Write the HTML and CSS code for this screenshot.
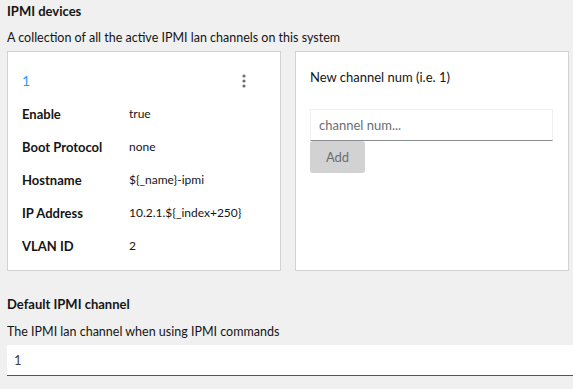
FILE: index.html
```html
<!DOCTYPE html>
<html lang="en">
<head>
  <meta charset="UTF-8">
  <title>IPMI devices</title>
  <link rel="stylesheet" href="styles.css">
</head>
<body>
  <div class="page">
    <h2 class="section-title">IPMI devices</h2>
    <p class="section-help">A collection of all the active IPMI lan channels on this system</p>

    <div class="cards">
      <div class="card">
        <div class="card-head">
          <span class="channel-num">1</span>
          <button class="kebab" aria-label="Actions">
            <svg width="4" height="14" viewBox="0 0 4 14"><circle cx="2" cy="2" r="1.6"/><circle cx="2" cy="7" r="1.6"/><circle cx="2" cy="12" r="1.6"/></svg>
          </button>
        </div>
        <dl class="props">
          <dt>Enable</dt><dd>true</dd>
          <dt>Boot Protocol</dt><dd>none</dd>
          <dt>Hostname</dt><dd>${_name}-ipmi</dd>
          <dt>IP Address</dt><dd>10.2.1.${_index+250}</dd>
          <dt>VLAN ID</dt><dd>2</dd>
        </dl>
      </div>

      <div class="card new-card">
        <label class="new-label">New channel num (i.e. 1)</label>
        <input class="text-input" type="text" placeholder="channel num...">
        <button class="add-btn" disabled>Add</button>
      </div>
    </div>

    <h3 class="field-title">Default IPMI channel</h3>
    <p class="field-help">The IPMI lan channel when using IPMI commands</p>
    <input class="wide-input" type="text" value="1">
  </div>
</body>
</html>
```

FILE: styles.css
```css
* {
  margin: 0;
  padding: 0;
  box-sizing: border-box;
}
body {
  background: #f0f0f0;
  font-family: "Lato", "Liberation Sans", sans-serif;
  color: #151515;
  width: 573px;
  height: 389px;
  overflow: hidden;
}
.page {
  padding: 2px 0 0 7px;
}
.section-title {
  font-size: 13px;
  font-weight: 700;
  line-height: 18px;
}
.section-help {
  font-size: 12.5px;
  line-height: 16px;
  margin-top: 10px;
  color: #151515;
}
.cards {
  display: flex;
  gap: 14px;
  margin-top: 5px;
  width: 562px;
}
.card {
  background: #fff;
  border: 1px solid #d2d2d2;
  height: 220px;
}
.card:first-child {
  width: 274px;
  padding: 12px 14px 0 14px;
}
.card-head {
  display: flex;
  justify-content: space-between;
  align-items: center;
  height: 33px;
}
.channel-num {
  color: #2b9af3;
  font-size: 14px;
}
.kebab {
  border: none;
  background: none;
  fill: #6a6e73;
  display: flex;
  margin-right: 20px;
}
.props {
  display: grid;
  grid-template-columns: 107px 1fr;
  grid-auto-rows: 33px;
  align-items: center;
  font-size: 12px;
}
.props dt {
  font-weight: 700;
  font-size: 13px;
}
.new-card {
  flex: 1;
  padding: 16px 15px 0 14px;
  display: flex;
  flex-direction: column;
  align-items: flex-start;
}
.new-label {
  font-size: 13px;
  line-height: 18px;
}
.text-input {
  margin-top: 23px;
  width: 243px;
  height: 32px;
  border: 1px solid #f0f0f0;
  border-bottom-color: #8a8d90;
  padding: 0 8px;
  font: inherit;
  font-size: 13px;
  outline: none;
}
.text-input::placeholder {
  color: #6a6e73;
}
.add-btn {
  width: 55px;
  height: 32px;
  border: none;
  border-radius: 3px;
  background: #d2d2d2;
  color: #6a6e73;
  font: inherit;
  font-size: 13px;
}
.field-title {
  font-size: 13px;
  font-weight: 700;
  margin-top: 25px;
  line-height: 16px;
}
.field-help {
  font-size: 12.5px;
  line-height: 16px;
  margin-top: 12px;
}
.wide-input {
  display: block;
  margin-top: 5px;
  width: 566px;
  height: 31px;
  border: none;
  border-bottom: 1px solid #0066cc;
  padding: 0 7px;
  font: inherit;
  font-size: 13px;
  color: #3c3f42;
  outline: none;
}
```
